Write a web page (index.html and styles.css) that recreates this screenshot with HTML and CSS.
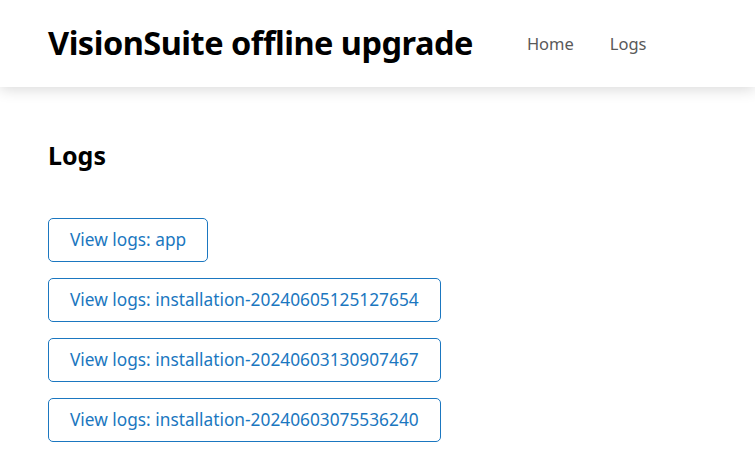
FILE: index.html
```html
<!DOCTYPE html>
<html>
<head>
<meta charset="utf-8">
<link rel="stylesheet" href="styles.css">
</head>
<body>
<header class="topbar">
  <h1 class="brand">VisionSuite offline upgrade</h1>
  <nav class="nav">
    <a class="nav-link" href="#">Home</a>
    <a class="nav-link" href="#">Logs</a>
  </nav>
</header>
<main class="content">
  <h2 class="section-title">Logs</h2>
  <div class="log-list">
    <a class="log-btn" href="#">View logs: app</a>
    <a class="log-btn" href="#">View logs: installation-20240605125127654</a>
    <a class="log-btn" href="#">View logs: installation-20240603130907467</a>
    <a class="log-btn" href="#">View logs: installation-20240603075536240</a>
  </div>
</main>
</body>
</html>
```
FILE: styles.css
```css
* { box-sizing: border-box; }
html, body { margin: 0; padding: 0; background: #fff; }
body { font-family: "Noto Sans", "Liberation Sans", sans-serif; }
.topbar {
  height: 87px;
  display: flex;
  align-items: center;
  padding: 0 48px;
  background: #fff;
  box-shadow: 0 2px 14px rgba(0,0,0,0.16);
  position: relative;
}
.brand {
  margin: 0;
  font-size: 32.5px;
  font-weight: 700;
  letter-spacing: -0.5px;
  color: #000;
  line-height: 1;
}
.nav { display: flex; gap: 36px; margin-left: 54px; }
.nav-link { color: #595959; text-decoration: none; font-size: 16.5px; }
.content { padding: 51px 48px 0; }
.section-title { margin: 0 0 46px; font-size: 25px; font-weight: 700; line-height: 34px; color: #000; }
.log-list { display: flex; flex-direction: column; align-items: flex-start; gap: 16px; }
.log-btn {
  display: inline-block;
  height: 44px;
  line-height: 42px;
  padding: 0 21px;
  border: 1px solid #1b77c0;
  border-radius: 5px;
  color: #1b77c0;
  text-decoration: none;
  font-size: 17.3px;
}
```
